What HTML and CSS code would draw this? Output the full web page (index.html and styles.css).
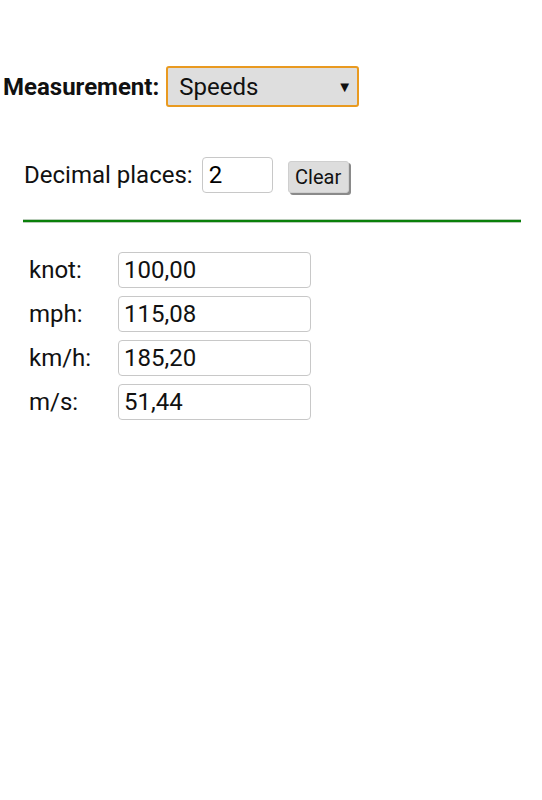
FILE: index.html
```html
<!DOCTYPE html>
<html lang="en">
<head>
  <meta charset="UTF-8" />
  <meta name="viewport" content="width=device-width, initial-scale=1" />
  <title>Unit converter</title>
  <link rel="stylesheet" href="styles.css">
</head>
<body>

  <div class="measure-row">
    <label for="measure" class="measure-label">Measurement:</label>
    <div class="select-wrap">
      <select id="measure">
        <option>Speeds</option>
        <option>Lengths</option>
        <option>Weights</option>
      </select>
      <span class="select-arrow">&#9660;</span>
    </div>
  </div>

  <div class="decimal-row">
    <label for="decimals">Decimal places:</label>
    <input type="text" id="decimals" value="2" autocomplete="off" />
    <button class="clear-btn">Clear</button>
  </div>

  <hr class="divider">

  <div class="units">
    <div class="unit-row">
      <label for="knot">knot:</label>
      <input type="text" id="knot" value="100,00" />
    </div>
    <div class="unit-row">
      <label for="mph">mph:</label>
      <input type="text" id="mph" value="115,08" />
    </div>
    <div class="unit-row">
      <label for="kmh">km/h:</label>
      <input type="text" id="kmh" value="185,20" />
    </div>
    <div class="unit-row">
      <label for="ms">m/s:</label>
      <input type="text" id="ms" value="51,44" />
    </div>
  </div>

</body>
</html>
```

FILE: styles.css
```css
body {
  font-family: Roboto, 'Noto Sans', sans-serif;
  margin: 0;
  padding: 0;
  color: #111;
  background: #fff;
  font-size: 24px;
  line-height: 28px;
}

.measure-row {
  display: flex;
  align-items: center;
  padding: 66px 0 0 3px;
}

.measure-label {
  font-weight: bold;
  margin-right: 7px;
}

.select-wrap {
  position: relative;
  width: 193px;
  height: 41px;
}

.select-wrap select {
  appearance: none;
  -webkit-appearance: none;
  width: 100%;
  height: 100%;
  box-sizing: border-box;
  border: 2px solid #e99a20;
  border-radius: 3px;
  background-color: #dedede;
  font-family: Roboto, sans-serif;
  font-size: 24px;
  color: #111;
  padding: 0 0 0 11px;
  outline: none;
}

.select-arrow {
  position: absolute;
  right: 7px;
  top: 7px;
  font-size: 15px;
  color: #111;
  pointer-events: none;
}

.decimal-row {
  display: flex;
  align-items: center;
  height: 36px;
  margin-top: 50px;
  padding-left: 24px;
}

.decimal-row label {
  margin-right: 9px;
}

#decimals {
  width: 71px;
  height: 36px;
  box-sizing: border-box;
  border: 1px solid #c8c8c8;
  border-radius: 4px;
  font-family: Roboto, sans-serif;
  font-size: 24px;
  padding: 0 6px;
  margin-right: 15px;
}

.clear-btn {
  font-family: Roboto, sans-serif;
  font-size: 20px;
  color: #111;
  background-color: #dddddd;
  border: 1px solid #cfcfcf;
  border-radius: 3px;
  box-shadow: 2px 2px 0 #8a8a8a;
  height: 32px;
  width: 61px;
  padding: 0;
  margin-top: 4px;
  cursor: pointer;
}

.divider {
  margin: 26px 21px 0 23px;
  height: 2px;
  border: none;
  border-top: 1px solid #b8ccb8;
  border-bottom: 1px solid #b8ccb8;
  background-color: #0a800a;
  box-sizing: content-box;
}

.units {
  padding: 29px 0 0 29px;
  display: flex;
  flex-direction: column;
  gap: 8px;
}

.unit-row {
  display: flex;
  align-items: center;
}

.unit-row label {
  width: 89px;
}

.unit-row input {
  width: 193px;
  height: 36px;
  box-sizing: border-box;
  border: 1px solid #c8c8c8;
  border-radius: 4px;
  font-family: Roboto, sans-serif;
  font-size: 24px;
  color: #111;
  padding: 0 5px;
}
```
